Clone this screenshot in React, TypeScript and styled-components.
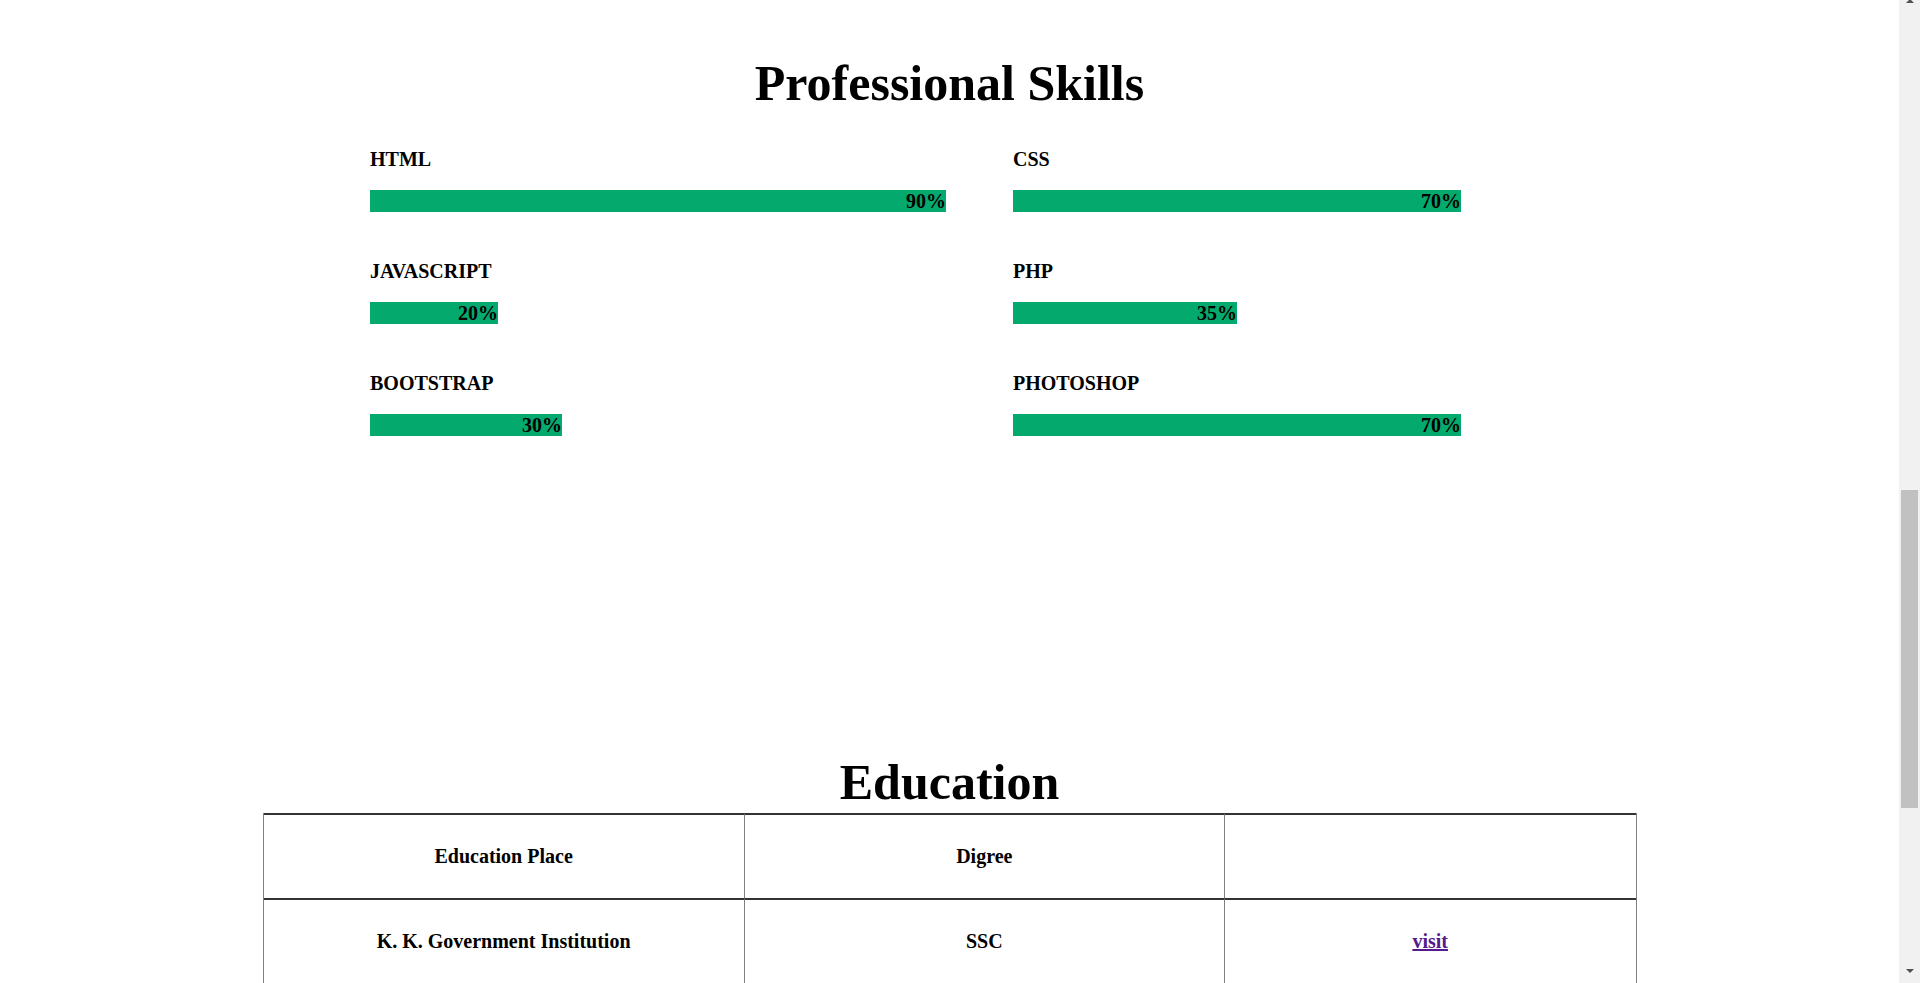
import React from "react";
import styled, { createGlobalStyle } from "styled-components";

const GlobalStyle = createGlobalStyle`
  html, body {
    margin: 0;
    padding: 0;
    background: #ffffff;
    overflow: hidden;
  }
  body {
    font-family: "Liberation Serif", "Times New Roman", serif;
    color: #000000;
  }
`;

const Page = styled.div`
  display: flex;
  height: 100vh;
  overflow: hidden;
`;

const Main = styled.main`
  flex: 1;
  padding-top: 55px;
  min-width: 0;
`;

const SectionTitle = styled.h2<{ $gapTop?: number; $gapBottom?: number }>`
  margin: ${(p) => p.$gapTop ?? 0}px 0 ${(p) => p.$gapBottom ?? 0}px;
  font-size: 50px;
  line-height: 57px;
  font-weight: 700;
  text-align: center;
`;

const SkillsGrid = styled.div`
  display: grid;
  grid-template-columns: 640px 640px;
  column-gap: 3px;
  margin-left: 370px;
`;

const SkillItem = styled.div`
  padding-bottom: 48px;
`;

const SkillLabel = styled.h4`
  margin: 0 0 19px;
  font-size: 20px;
  line-height: 23px;
  font-weight: 700;
`;

const Bar = styled.div`
  height: 22px;
  background: #04aa6d;
  text-align: right;
  font-size: 20px;
  line-height: 22px;
  font-weight: 700;
`;

const EduTable = styled.table`
  width: 1374px;
  margin: 2px auto 0;
  border-collapse: separate;
  border-spacing: 0;
  border-left: 1px solid #808080;
  border-right: 1px solid #808080;
  border-bottom: 1px solid #808080;
  table-layout: fixed;
`;

const Cell = styled.td<{ $first?: boolean }>`
  padding: 30px 0;
  border-top: 2px solid #333333;
  border-left: ${(p) => (p.$first ? "none" : "1px solid #808080")};
  text-align: center;
  vertical-align: middle;
  font-size: 20px;
  line-height: 23px;
  font-weight: 700;
`;

const HeadCell = styled(Cell).attrs({ as: "th" })``;

const VisitLink = styled.a`
  color: #551a8b;
  text-decoration: underline;
`;

const ScrollTrack = styled.div`
  width: 21px;
  flex: none;
  background: #f1f1f1;
  display: flex;
  flex-direction: column;
  align-items: center;
`;

const Arrow = styled.div<{ $down?: boolean }>`
  width: 0;
  height: 0;
  border-left: 4px solid transparent;
  border-right: 4px solid transparent;
  ${(p) =>
    p.$down
      ? "border-top: 4px solid #505050; margin-top: 9px; margin-bottom: 10px;"
      : "border-bottom: 4px solid #505050; margin-top: -1px;"}
`;

const ThumbSpace = styled.div<{ $grow: number }>`
  flex: ${(p) => p.$grow} 1 0;
`;

const Thumb = styled.div`
  width: 17px;
  height: 318px;
  flex: none;
  background: #c1c1c1;
`;

type Skill = { name: string; value: number };

const skills: Skill[] = [
  { name: "HTML", value: 90 },
  { name: "CSS", value: 70 },
  { name: "JAVASCRIPT", value: 20 },
  { name: "PHP", value: 35 },
  { name: "BOOTSTRAP", value: 30 },
  { name: "PHOTOSHOP", value: 70 },
];

export default function App() {
  return (
    <>
      <GlobalStyle />
      <Page>
        <Main>
          <SectionTitle $gapBottom={36}>Professional Skills</SectionTitle>
          <SkillsGrid>
            {skills.map((s) => (
              <SkillItem key={s.name}>
                <SkillLabel>{s.name}</SkillLabel>
                <Bar style={{ width: `${s.value}%` }}>{s.value}%</Bar>
              </SkillItem>
            ))}
          </SkillsGrid>
          <SectionTitle $gapTop={270}>Education</SectionTitle>
          <EduTable>
            <colgroup>
              <col style={{ width: "35%" }} />
              <col style={{ width: "35%" }} />
              <col style={{ width: "30%" }} />
            </colgroup>
            <thead>
              <tr>
                <HeadCell $first>Education Place</HeadCell>
                <HeadCell>Digree</HeadCell>
                <HeadCell></HeadCell>
              </tr>
            </thead>
            <tbody>
              <tr>
                <Cell $first>K. K. Government Institution</Cell>
                <Cell>SSC</Cell>
                <Cell>
                  <VisitLink href="#">visit</VisitLink>
                </Cell>
              </tr>
            </tbody>
          </EduTable>
        </Main>
        <ScrollTrack>
          <Arrow />
          <ThumbSpace $grow={477} />
          <Thumb />
          <ThumbSpace $grow={149} />
          <Arrow $down />
        </ScrollTrack>
      </Page>
    </>
  );
}
